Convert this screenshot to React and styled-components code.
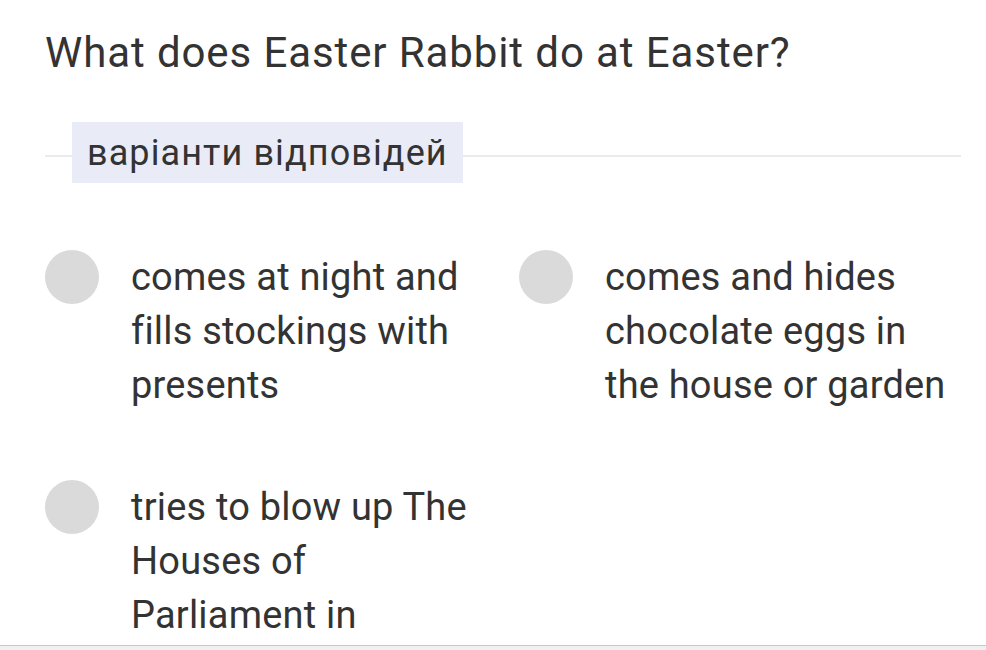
import React from 'react'
import styled, { createGlobalStyle } from 'styled-components'

const GlobalStyle = createGlobalStyle`
  html, body {
    margin: 0;
    padding: 0;
    background: #fff;
  }
  body {
    font-family: Roboto, "Noto Sans", "Liberation Sans", sans-serif;
    color: #333;
  }
`

const Page = styled.div`
  height: 650px;
  display: flex;
  flex-direction: column;
  overflow: hidden;
`

const Content = styled.div`
  flex: 1;
  overflow: hidden;
  padding: 26px 25px 0 45px;
`

const Question = styled.h1`
  margin: 0;
  font-size: 42px;
  font-weight: 400;
  letter-spacing: 0.9px;
  line-height: 54px;
  color: #333;
`

const Divider = styled.div`
  position: relative;
  margin-top: 42px;
  height: 61px;
  display: flex;
  align-items: center;
  &::before {
    content: '';
    position: absolute;
    left: 0;
    right: 0;
    top: 33px;
    height: 2px;
    background: #ebebeb;
  }
`

const Label = styled.span`
  position: relative;
  margin-left: 27px;
  height: 61px;
  padding: 0 15px;
  display: flex;
  align-items: center;
  background: #e9ecf6;
  font-size: 36px;
  letter-spacing: 1.1px;
  color: #333;
`

const Options = styled.div`
  margin-top: 67px;
  display: grid;
  grid-template-columns: 474px 1fr;
  row-gap: 68px;
`

const Option = styled.div`
  display: flex;
  align-items: flex-start;
  gap: 32px;
`

const Radio = styled.span`
  flex: none;
  width: 54px;
  height: 54px;
  border-radius: 50%;
  background: #dadada;
`

const OptionText = styled.div`
  width: 345px;
  font-size: 38px;
  letter-spacing: 0.2px;
  line-height: 54px;
  color: #333;
`

const Footer = styled.div`
  flex: none;
  height: 4px;
  border-top: 1px solid #c9c9c9;
  background: #f0f0f0;
`

const answers = [
  'comes at night and fills stockings with presents',
  'comes and hides chocolate eggs in the house or garden',
  'tries to blow up The Houses of Parliament in London',
]

export default function App() {
  return (
    <Page>
      <GlobalStyle />
      <Content>
        <Question>What does Easter Rabbit do at Easter?</Question>
        <Divider>
          <Label>варіанти відповідей</Label>
        </Divider>
        <Options>
          {answers.map((a) => (
            <Option key={a}>
              <Radio />
              <OptionText>{a}</OptionText>
            </Option>
          ))}
        </Options>
      </Content>
      <Footer />
    </Page>
  )
}
